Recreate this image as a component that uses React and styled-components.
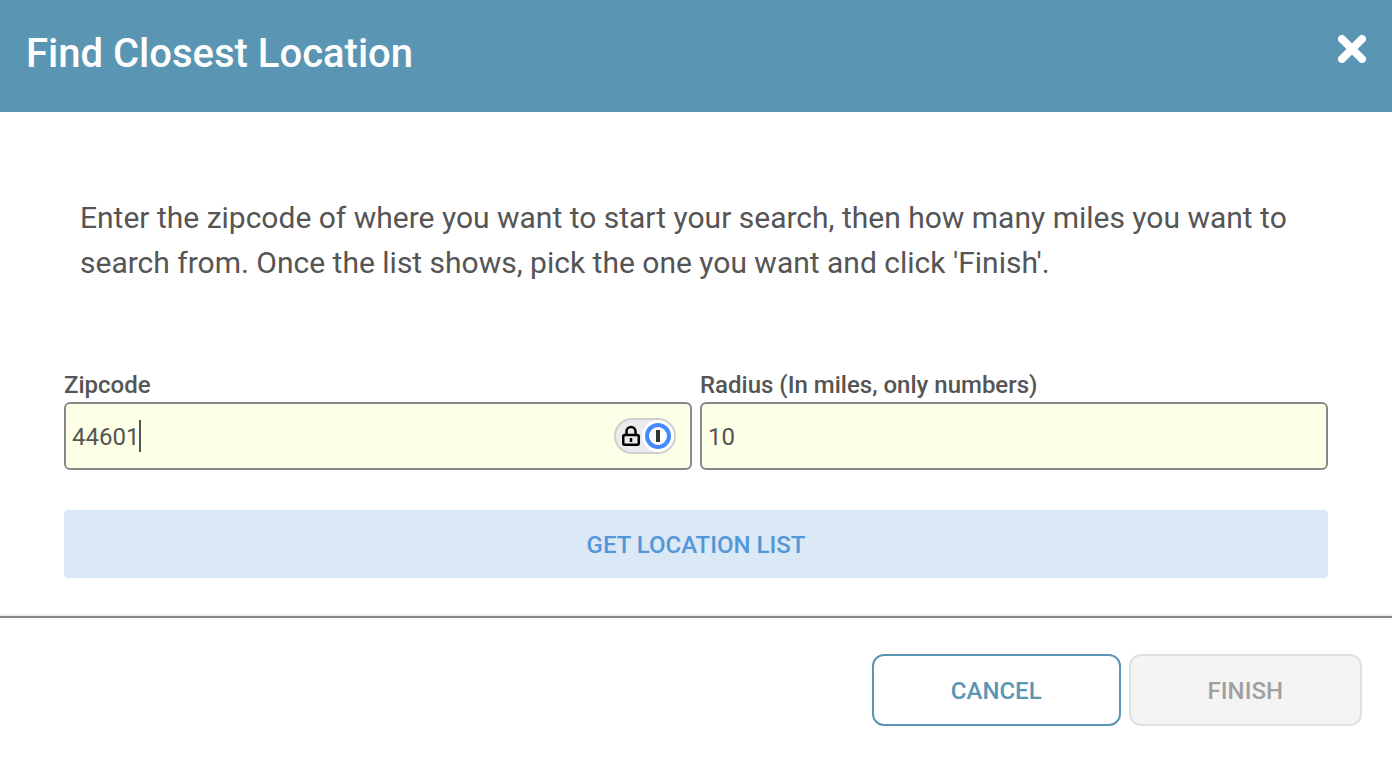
import React, { useState } from "react";
import styled, { createGlobalStyle, css } from "styled-components";

const GlobalStyle = createGlobalStyle`
  *, *::before, *::after {
    box-sizing: border-box;
  }

  body {
    margin: 0;
    background: #ffffff;
    color: #555555;
    font-family: Roboto, sans-serif;
  }

  button, input {
    font: inherit;
  }
`;

const Dialog = styled.form`
  display: flex;
  flex-direction: column;
  min-height: 100vh;
`;

const Header = styled.header`
  display: flex;
  justify-content: space-between;
  align-items: flex-start;
  padding: 30px 26px 34px;
  background: #5a96b3;
  color: #ffffff;
`;

const Title = styled.h1`
  margin: 0;
  font-size: 40px;
  font-weight: 500;
  line-height: 48px;
`;

const CloseButton = styled.button`
  display: flex;
  align-items: center;
  height: 38px;
  padding: 0;
  border: 0;
  background: none;
  color: inherit;
  cursor: pointer;
`;

const Content = styled.main`
  padding: 83px 64px 38px;
`;

const Intro = styled.p`
  margin: 0 0 83px;
  padding: 0 16px;
  font-size: 30px;
  line-height: 45px;
`;

const Fields = styled.div`
  display: grid;
  grid-template-columns: 1fr 1fr;
  gap: 8px;
  margin-bottom: 40px;
`;

const Label = styled.label`
  display: block;
  font-size: 24px;
  font-weight: 500;
  line-height: 34px;
`;

const InputBox = styled.div`
  display: flex;
  align-items: center;
  height: 68px;
  padding: 0 14px 0 6px;
  border: 2px solid #888888;
  border-radius: 6px;
  background: #fdffe6;
`;

const Input = styled.input`
  ${({ $fit }) => ($fit ? "field-sizing: content;" : "flex: 1;")}
  min-width: 0;
  height: 100%;
  padding: 2px 0 0;
  border: 0;
  outline: 0;
  background: transparent;
  color: #555555;
  font-size: 24px;
  caret-color: ${({ $fit }) => ($fit ? "transparent" : "auto")};
`;

const Caret = styled.span`
  width: 2px;
  height: 32px;
  background: #555555;
`;

const AutofillButton = styled.button`
  display: flex;
  margin-left: auto;
  padding: 0;
  border: 0;
  background: none;
  cursor: pointer;
`;

const buttonBase = css`
  font-size: 24px;
  font-weight: 500;
  line-height: 36px;
  text-transform: uppercase;
  cursor: pointer;
`;

const ListButton = styled.button`
  ${buttonBase}
  display: block;
  width: 100%;
  padding: 17px 16px 15px;
  border: 0;
  border-radius: 4px;
  background: #dbe9f6;
  color: #5397d8;
`;

const Footer = styled.footer`
  display: flex;
  justify-content: flex-end;
  gap: 8px;
  padding: 36px 30px 34px;
  border-top: 2px solid #888888;
  box-shadow: 0 -2px 0 #edf2f2;
`;

const ActionButton = styled.button`
  ${buttonBase}
  padding: 17px 77px 15px;
  border: 2px solid #5a96b3;
  border-radius: 12px;
  background: #ffffff;
  color: #5a96b3;

  &:disabled {
    border-color: #e0e0e0;
    background: #f4f4f4;
    color: #a0a0a0;
    cursor: default;
  }
`;

function CloseIcon() {
  return (
    <svg width="28" height="28" viewBox="0 0 28 28" aria-hidden="true">
      <path d="M4 4L24 24M24 4L4 24" stroke="#ffffff" strokeWidth="8" strokeLinecap="round" />
    </svg>
  );
}

function AutofillIcon() {
  return (
    <svg width="62" height="36" viewBox="0 0 62 36" aria-hidden="true">
      <rect x="1" y="1" width="60" height="34" rx="17" fill="#ebebeb" stroke="#cfcfcf" strokeWidth="2" />
      <circle cx="44" cy="18" r="16" fill="#ffffff" />
      <circle cx="44" cy="18" r="11" fill="#ffffff" stroke="#448aff" strokeWidth="4" />
      <rect x="42" y="12" width="4" height="12" fill="#333333" />
      <path d="M12.500 17v-3.500a4.500 4.500 0 0 1 9 0V17" fill="none" stroke="#000000" strokeWidth="2.500" />
      <rect x="9.250" y="17" width="15.500" height="9.750" rx="1.500" fill="none" stroke="#000000" strokeWidth="2.500" />
      <path d="M17 20v4" stroke="#000000" strokeWidth="2.500" />
    </svg>
  );
}

function App() {
  const [zipcode, setZipcode] = useState("44601");
  const [radius, setRadius] = useState("10");
  const [focused, setFocused] = useState(true);

  function handleSubmit(e) {
    e.preventDefault();
  }

  return (
    <>
      <GlobalStyle />
      <Dialog onSubmit={handleSubmit}>
        <Header>
          <Title>Find Closest Location</Title>
          <CloseButton type="button" aria-label="Close">
            <CloseIcon />
          </CloseButton>
        </Header>
        <Content>
          <Intro>
            Enter the zipcode of where you want to start your search, then how
            many miles you want to search from. Once the list shows, pick the
            one you want and click 'Finish'.
          </Intro>
          <Fields>
            <div>
              <Label htmlFor="zipcode">Zipcode</Label>
              <InputBox>
                <Input
                  $fit
                  id="zipcode"
                  type="text"
                  value={zipcode}
                  onChange={(e) => setZipcode(e.target.value)}
                  onFocus={() => setFocused(true)}
                  onBlur={() => setFocused(false)}
                />
                {focused && <Caret />}
                <AutofillButton type="button" aria-label="Fill from password manager">
                  <AutofillIcon />
                </AutofillButton>
              </InputBox>
            </div>
            <div>
              <Label htmlFor="radius">Radius (In miles, only numbers)</Label>
              <InputBox>
                <Input
                  id="radius"
                  type="text"
                  value={radius}
                  onChange={(e) => setRadius(e.target.value)}
                />
              </InputBox>
            </div>
          </Fields>
          <ListButton type="button">Get Location List</ListButton>
        </Content>
        <Footer>
          <ActionButton type="button">Cancel</ActionButton>
          <ActionButton type="submit" disabled>
            Finish
          </ActionButton>
        </Footer>
      </Dialog>
    </>
  );
}

export default App;
